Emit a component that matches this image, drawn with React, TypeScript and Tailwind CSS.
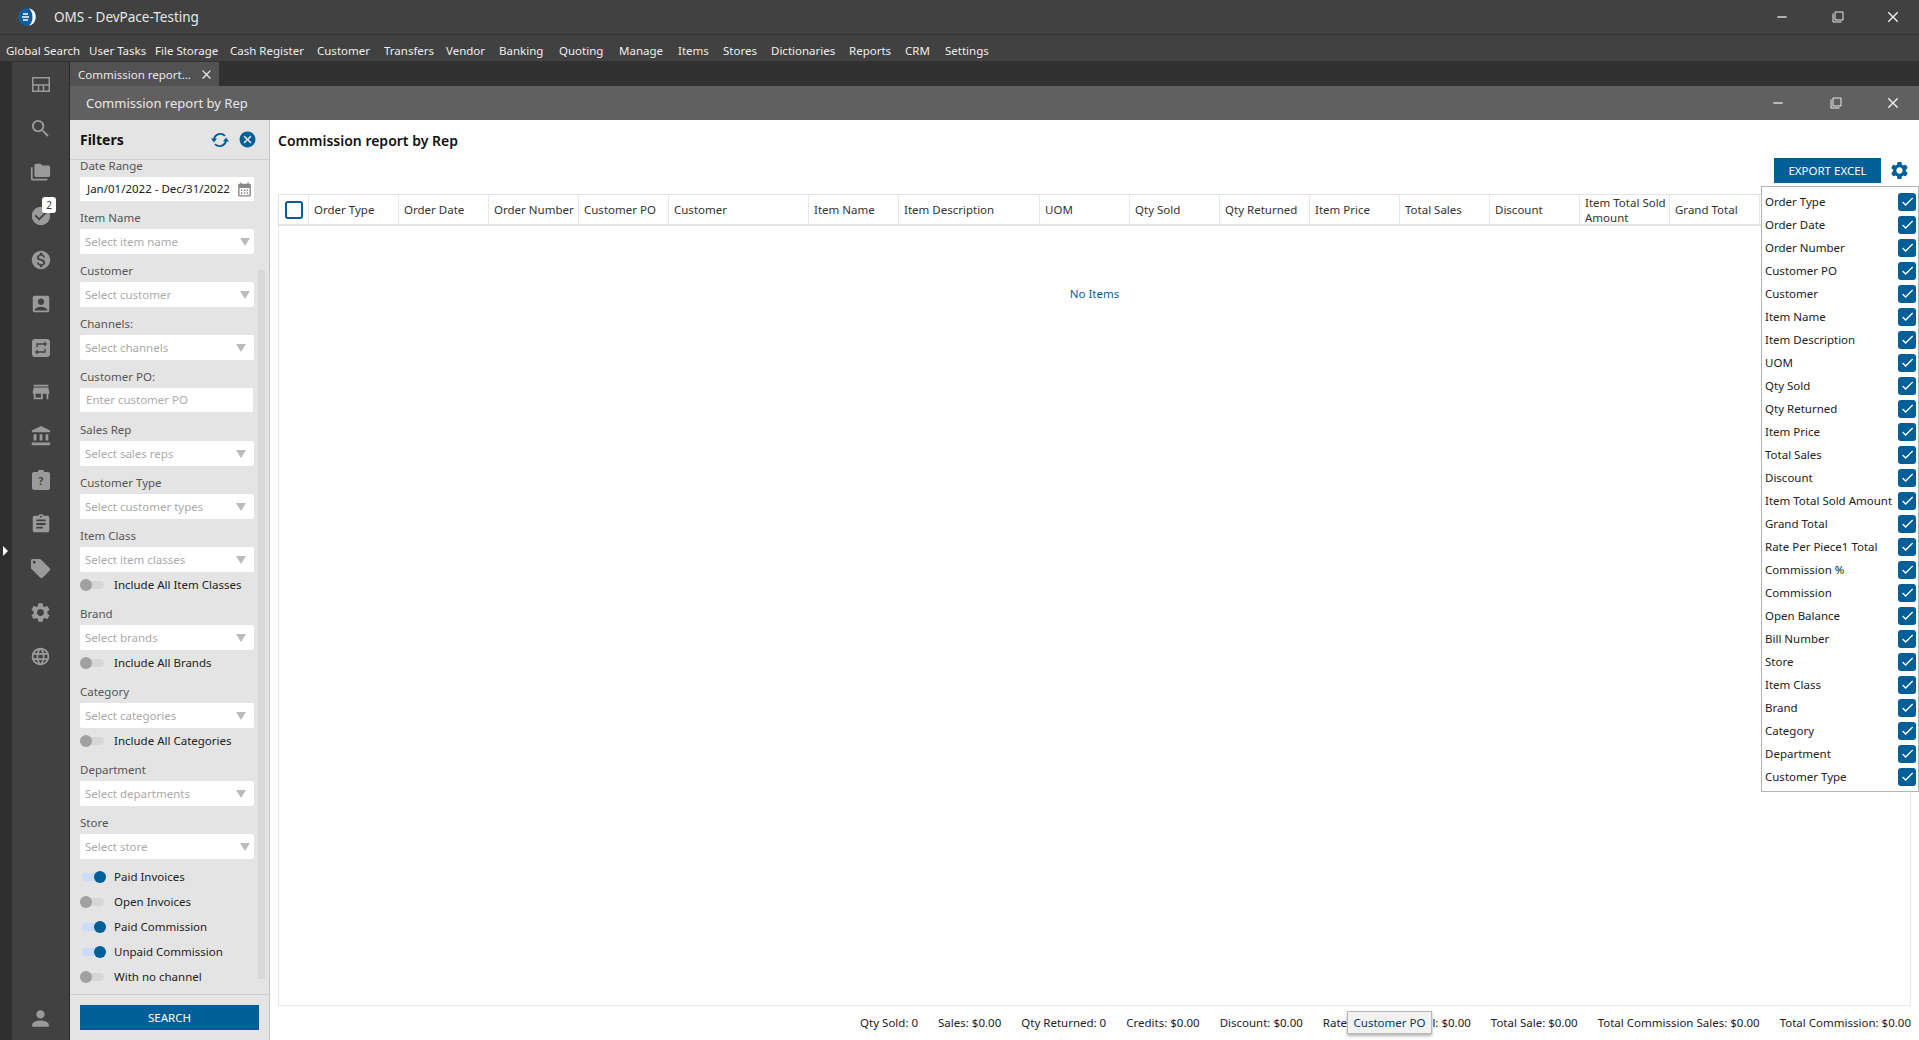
import {
  MdAccountBalance,
  MdAccountBox,
  MdAssignment,
  MdCalendarMonth,
  MdCancel,
  MdCheck,
  MdCheckCircle,
  MdClose,
  MdFilterNone,
  MdFolderCopy,
  MdLanguage,
  MdLocalOffer,
  MdMonetizationOn,
  MdPerson,
  MdRemove,
  MdRepeat,
  MdSearch,
  MdSettings,
  MdStore,
} from 'react-icons/md';

const MENU = [
  { label: 'Global Search', width: 'w-[83px]' },
  { label: 'User Tasks', width: 'w-[66px]' },
  { label: 'File Storage', width: 'w-[75px]' },
  { label: 'Cash Register', width: 'w-[87px]' },
  { label: 'Customer', width: 'w-[67px]' },
  { label: 'Transfers', width: 'w-[62px]' },
  { label: 'Vendor', width: 'w-[53px]' },
  { label: 'Banking', width: 'w-[60px]' },
  { label: 'Quoting', width: 'w-[60px]' },
  { label: 'Manage', width: 'w-[59px]' },
  { label: 'Items', width: 'w-[45px]' },
  { label: 'Stores', width: 'w-[48px]' },
  { label: 'Dictionaries', width: 'w-[78px]' },
  { label: 'Reports', width: 'w-[56px]' },
  { label: 'CRM', width: 'w-[40px]' },
  { label: 'Settings', width: 'w-[50px]' },
];

const COLUMNS = [
  { label: 'Order Type', width: 'w-[90px]' },
  { label: 'Order Date', width: 'w-[90px]' },
  { label: 'Order Number', width: 'w-[90px]' },
  { label: 'Customer PO', width: 'w-[90px]' },
  { label: 'Customer', width: 'w-[140px]' },
  { label: 'Item Name', width: 'w-[90px]' },
  { label: 'Item Description', width: 'w-[141px]' },
  { label: 'UOM', width: 'w-[90px]' },
  { label: 'Qty Sold', width: 'w-[90px]' },
  { label: 'Qty Returned', width: 'w-[90px]' },
  { label: 'Item Price', width: 'w-[90px]' },
  { label: 'Total Sales', width: 'w-[90px]' },
  { label: 'Discount', width: 'w-[90px]' },
  { label: 'Item Total Sold Amount', width: 'w-[90px]' },
  { label: 'Grand Total', width: 'w-[90px]' },
];

const PICKER = [
  'Order Type',
  'Order Date',
  'Order Number',
  'Customer PO',
  'Customer',
  'Item Name',
  'Item Description',
  'UOM',
  'Qty Sold',
  'Qty Returned',
  'Item Price',
  'Total Sales',
  'Discount',
  'Item Total Sold Amount',
  'Grand Total',
  'Rate Per Piece1 Total',
  'Commission %',
  'Commission',
  'Open Balance',
  'Bill Number',
  'Store',
  'Item Class',
  'Brand',
  'Category',
  'Department',
  'Customer Type',
];

const TOTALS = [
  'Qty Sold: 0',
  'Sales: $0.00',
  'Qty Returned: 0',
  'Credits: $0.00',
  'Discount: $0.00',
  'Rate Per Piece1 Total: $0.00',
  'Total Sale: $0.00',
  'Total Commission Sales: $0.00',
  'Total Commission: $0.00',
];

function RailItem({ children }: { children: React.ReactNode }) {
  return <div className="relative flex h-[44px] items-center justify-center text-[#9a9a9a]">{children}</div>;
}

function Rail() {
  return (
    <div className="flex w-[70px] shrink-0 bg-[#2f2f2f]">
      <div className="relative w-[12px]">
        <div className="absolute left-[3px] top-[484px] h-0 w-0 border-y-[5px] border-l-[5px] border-y-transparent border-l-white" />
      </div>
      <div className="flex w-[58px] flex-col border-r border-[#2a2a2a] bg-[#414141]">
        <RailItem>
          <svg width="18" height="15" viewBox="0 0 18 15" fill="none" stroke="#9a9a9a" strokeWidth="1.5">
            <rect x="0.75" y="0.75" width="16.5" height="13.5" />
            <path d="M1 8h16M6.5 8v6M11.5 8v6" />
          </svg>
        </RailItem>
        <RailItem>
          <MdSearch size={23} />
        </RailItem>
        <RailItem>
          <MdFolderCopy size={21} />
        </RailItem>
        <RailItem>
          <MdCheckCircle size={22} />
          <span className="absolute left-[30px] top-[3px] flex h-[16px] w-[14px] items-center justify-center rounded-[3px] bg-white text-[10px] text-[#333]">
            2
          </span>
        </RailItem>
        <RailItem>
          <MdMonetizationOn size={22} />
        </RailItem>
        <RailItem>
          <MdAccountBox size={22} />
        </RailItem>
        <RailItem>
          <span className="flex h-[18px] w-[18px] items-center justify-center rounded-[3px] bg-[#9a9a9a] text-[#414141]">
            <MdRepeat size={16} />
          </span>
        </RailItem>
        <RailItem>
          <MdStore size={22} />
        </RailItem>
        <RailItem>
          <MdAccountBalance size={22} />
        </RailItem>
        <RailItem>
          <svg width="18" height="20" viewBox="0 0 18 20">
            <path fill="#9a9a9a" d="M2 2h4a3 3 0 0 1 6 0h4a2 2 0 0 1 2 2v14a2 2 0 0 1-2 2H2a2 2 0 0 1-2-2V4a2 2 0 0 1 2-2z" />
            <text x="9" y="15" fontSize="10" fontWeight="700" textAnchor="middle" fill="#414141" fontFamily="Noto Sans, sans-serif">
              ?
            </text>
          </svg>
        </RailItem>
        <RailItem>
          <MdAssignment size={22} />
        </RailItem>
        <RailItem>
          <MdLocalOffer size={23} />
        </RailItem>
        <RailItem>
          <MdSettings size={23} />
        </RailItem>
        <RailItem>
          <MdLanguage size={21} />
        </RailItem>
        <div className="mt-auto flex h-[44px] items-center justify-center text-[#9a9a9a]">
          <MdPerson size={25} />
        </div>
      </div>
    </div>
  );
}

function Group({ label, first, gap = 'mt-[11px]', children }: { label: string; first?: boolean; gap?: string; children: React.ReactNode }) {
  return (
    <div className={first ? '' : gap}>
      <div className="h-[17px] text-[11.5px] leading-[12px] text-[#555]">{label}</div>
      {children}
    </div>
  );
}

function Select({ placeholder, far }: { placeholder: string; far?: boolean }) {
  return (
    <div
      className={`flex h-[25px] w-[174px] items-center justify-between rounded-[2px] bg-white pl-[5px] text-[11.5px] text-[#aaa] ${far ? 'pr-[4px]' : 'pr-[8px]'}`}
    >
      <span>{placeholder}</span>
      <span className="h-0 w-0 border-x-[5px] border-t-[8px] border-x-transparent border-t-[#bbb]" />
    </div>
  );
}

function Toggle({ label, on }: { label: string; on?: boolean }) {
  return (
    <div className="flex h-[25px] items-center text-[11.5px] text-[#222]">
      <span className="relative h-[12px] w-[26px] shrink-0">
        {on ? (
          <>
            <span className="absolute left-[2px] right-0 top-[2px] h-[8px] rounded-full bg-[#c9dcfb]" />
            <span className="absolute right-0 top-0 h-[12px] w-[12px] rounded-full bg-[#005f96]" />
          </>
        ) : (
          <>
            <span className="absolute left-0 right-[2px] top-[2px] h-[8px] rounded-full bg-[#d6d6d6]" />
            <span className="absolute left-0 top-0 h-[12px] w-[12px] rounded-full bg-[#a0a0a0]" />
          </>
        )}
      </span>
      <span className="ml-[8px]">{label}</span>
    </div>
  );
}

function Filters() {
  return (
    <div className="flex w-[200px] shrink-0 flex-col border-r border-[#c4c4c4] bg-[#e4e4e4]">
      <div className="flex h-[40px] shrink-0 items-center border-b border-[#cfcfcf] pl-[10px] pr-[12px]">
        <span className="text-[14px] font-bold text-[#111]">Filters</span>
        <svg width="18" height="16" viewBox="0 0 18 16" fill="none" className="ml-auto text-[#005f96]">
          <path d="M14 3.800A6.500 6.500 0 0 0 3 7" stroke="currentColor" strokeWidth="1.800" />
          <path d="M0 6.500h6l-3 4z" fill="currentColor" />
          <path d="M4 12.200A6.500 6.500 0 0 0 15 9" stroke="currentColor" strokeWidth="1.800" />
          <path d="M12 9.500h6l-3-4z" fill="currentColor" />
        </svg>
        <MdCancel size={19} className="ml-[9px] text-[#005f96]" />
      </div>
      <div className="relative flex-1 overflow-hidden pl-[10px]">
        <div className="absolute left-[188px] top-[110px] h-[709px] w-[7px] bg-[#d8d8d8]" />
        <Group label="Date Range" first>
          <div className="flex h-[24px] w-[174px] items-center justify-between bg-white pl-[7px] pr-[1px] text-[11.5px] text-[#222]">
            <span className="whitespace-nowrap">Jan/01/2022 - Dec/31/2022</span>
            <MdCalendarMonth size={17} className="shrink-0 text-[#888]" />
          </div>
        </Group>
        <Group label="Item Name">
          <Select placeholder="Select item name" far />
        </Group>
        <Group label="Customer">
          <Select placeholder="Select customer" far />
        </Group>
        <Group label="Channels:">
          <Select placeholder="Select channels" />
        </Group>
        <Group label="Customer PO:">
          <div className="flex h-[24px] w-[173px] items-center bg-white pl-[6px] text-[11.5px] text-[#aaa]">Enter customer PO</div>
        </Group>
        <Group label="Sales Rep" gap="mt-[12px]">
          <Select placeholder="Select sales reps" />
        </Group>
        <Group label="Customer Type">
          <Select placeholder="Select customer types" />
        </Group>
        <Group label="Item Class">
          <Select placeholder="Select item classes" />
          <div className="h-[26px]">
            <Toggle label="Include All Item Classes" />
          </div>
        </Group>
        <Group label="Brand" gap="mt-[10px]">
          <Select placeholder="Select brands" />
          <div className="h-[26px]">
            <Toggle label="Include All Brands" />
          </div>
        </Group>
        <Group label="Category" gap="mt-[10px]">
          <Select placeholder="Select categories" />
          <div className="h-[26px]">
            <Toggle label="Include All Categories" />
          </div>
        </Group>
        <Group label="Department" gap="mt-[10px]">
          <Select placeholder="Select departments" />
        </Group>
        <Group label="Store">
          <Select placeholder="Select store" far />
        </Group>
        <div className="mt-[5px]">
          <Toggle label="Paid Invoices" on />
          <Toggle label="Open Invoices" />
          <Toggle label="Paid Commission" on />
          <Toggle label="Unpaid Commission" on />
          <Toggle label="With no channel" />
        </div>
      </div>
      <div className="flex h-[46px] shrink-0 border-t border-[#cfcfcf] pl-[10px] pt-[10px]">
        <button className="h-[25px] w-[179px] bg-[#005f96] text-[11.5px] text-white">SEARCH</button>
      </div>
    </div>
  );
}

function ColumnPicker() {
  return (
    <div className="absolute right-0 top-[66px] w-[158px] border border-[#b4b4b4] bg-white pb-[3px] pl-[3px] pr-[2px] pt-[3px]">
      {PICKER.map((name) => (
        <div key={name} className="flex h-[23px] items-center justify-between text-[11.5px] text-[#222]">
          <span className="whitespace-nowrap">{name}</span>
          <span className="flex h-[18px] w-[18px] items-center justify-center rounded-[3px] bg-[#005f96] text-white">
            <MdCheck size={15} />
          </span>
        </div>
      ))}
    </div>
  );
}

function Main() {
  return (
    <div className="relative flex min-w-0 flex-1 flex-col bg-white px-2">
      <div className="flex h-[38px] shrink-0 items-center pt-[3px] text-[14px] font-semibold text-[#111]">Commission report by Rep</div>
      <div className="flex h-[36px] shrink-0 justify-end pr-[1px]">
        <button className="h-[25px] w-[107px] bg-[#005f96] text-[11.5px] text-white">EXPORT EXCEL</button>
        <MdSettings size={21} className="ml-[8px] mt-[2px] text-[#005f96]" />
      </div>
      <div className="flex h-[32px] shrink-0 overflow-hidden border border-b-2 border-[#e2e2e2]">
        <div className="flex w-[30px] shrink-0 items-center justify-center border-r border-[#e8e8e8]">
          <span className="h-[18px] w-[18px] rounded-[3px] border-2 border-[#005f96]" />
        </div>
        {COLUMNS.map((col) => (
          <div key={col.label} className={`${col.width} flex shrink-0 items-center border-r border-[#e8e8e8] pl-[5px] text-[11.5px] leading-[15px] text-[#333]`}>
            {col.label}
          </div>
        ))}
      </div>
      <div className="flex-1 border-x border-b border-[#e8e8e8] pt-[60px] text-center text-[11.5px] leading-[16px] text-[#005f96]">No Items</div>
      <div className="flex h-[34px] shrink-0 items-center justify-end gap-[20px] text-[11.5px] text-[#222]">
        {TOTALS.map((t) => (
          <span key={t} className="whitespace-nowrap">
            {t}
          </span>
        ))}
      </div>
      <ColumnPicker />
      <div className="absolute left-[1077px] top-[891px] flex h-[23px] w-[85px] items-center justify-center border border-[#b8b8b8] bg-[#f2f2f2] text-[11.5px] text-[#003f66] shadow-[0_2px_3px_rgba(0,0,0,0.3)]">
        Customer PO
      </div>
    </div>
  );
}

export default function App() {
  return (
    <div className="flex h-[1040px] w-[1919px] flex-col overflow-hidden bg-[#313131] font-['Noto_Sans',sans-serif]">
      <div className="flex h-[35px] shrink-0 items-center border-b border-[#333] bg-[#414141] pl-[18px] text-[#e8e8e8]">
        <svg width="18" height="18" viewBox="0 0 18 18">
          <circle cx="9" cy="9" r="9" fill="#0f5f9e" />
          <path d="M11 0.300a9 9 0 0 1 0 17.400c2.500-2.500 3.500-5 3.500-8.700s-1-6.200-3.500-8.700z" fill="#fff" />
          <path d="M5 6h5M4 9h7M5 12h5" stroke="#fff" strokeWidth="1.300" />
        </svg>
        <span className="ml-[18px] text-[13.5px]">OMS - DevPace-Testing</span>
        <div className="ml-auto flex items-center pr-[17px]">
          <MdRemove size={16} />
          <MdFilterNone size={12} className="ml-[42px]" />
          <MdClose size={18} className="ml-[40px]" />
        </div>
      </div>
      <div className="flex h-[26px] shrink-0 items-center bg-[#414141] pl-[6px] pt-[5px] text-[11.5px] text-[#eee]">
        {MENU.map((m) => (
          <span key={m.label} className={`${m.width} shrink-0 whitespace-nowrap`}>
            {m.label}
          </span>
        ))}
      </div>
      <div className="flex min-h-0 flex-1 pt-[1px]">
        <Rail />
        <div className="flex min-w-0 flex-1 flex-col">
          <div className="flex h-[24px] shrink-0">
            <div className="flex w-[149px] items-center justify-between bg-[#525252] pl-[8px] pr-[5px] pt-[1px] text-[11.5px] text-[#e8e8e8]">
              <span>Commission report...</span>
              <MdClose size={15} />
            </div>
          </div>
          <div className="flex h-[34px] shrink-0 items-center bg-[#606060] pl-[16px] text-[13px] text-[#e8e8e8]">
            <span className="pt-[2px]">Commission report by Rep</span>
            <div className="ml-auto flex items-center pr-[17px]">
              <MdRemove size={16} />
              <MdFilterNone size={12} className="ml-[44px]" />
              <MdClose size={18} className="ml-[42px]" />
            </div>
          </div>
          <div className="flex min-h-0 flex-1">
            <Filters />
            <Main />
          </div>
        </div>
      </div>
    </div>
  );
}
